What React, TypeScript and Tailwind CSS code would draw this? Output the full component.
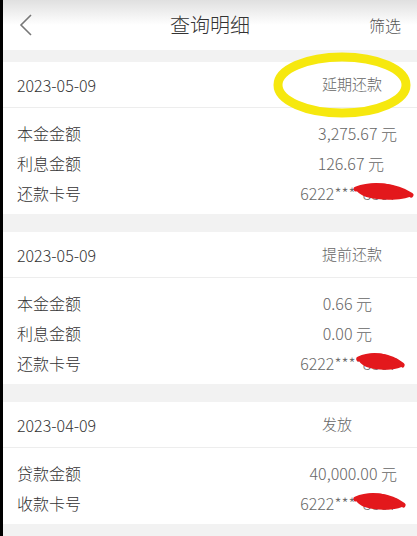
import React from "react";

type Row = { label: string; value: string; pr: string; card?: boolean };
type Record = { date: string; tag: string; rows: Row[]; scribble: string };

const records: Record[] = [
  {
    date: "2023-05-09",
    tag: "延期还款",
    scribble: "right-[3px] w-[62px]",
    rows: [
      { label: "本金金额", value: "3,275.67 元", pr: "pr-[20px]" },
      { label: "利息金额", value: "126.67 元", pr: "pr-[33px]" },
      { label: "还款卡号", value: "6222****8867", pr: "pr-[20px]", card: true },
    ],
  },
  {
    date: "2023-05-09",
    tag: "提前还款",
    scribble: "right-[12px] w-[50px]",
    rows: [
      { label: "本金金额", value: "0.66 元", pr: "pr-[45px]" },
      { label: "利息金额", value: "0.00 元", pr: "pr-[45px]" },
      { label: "还款卡号", value: "6222****8867", pr: "pr-[20px]", card: true },
    ],
  },
  {
    date: "2023-04-09",
    tag: "发放",
    scribble: "right-[11px] w-[54px]",
    rows: [
      { label: "贷款金额", value: "40,000.00 元", pr: "pr-[20px]" },
      { label: "收款卡号", value: "6222****8867", pr: "pr-[20px]", card: true },
    ],
  },
];

// 红色涂抹 (遮住卡号)
function Scribble({ cls }: { cls: string }) {
  return (
    <svg className={`absolute top-[2px] h-[22px] ${cls}`} viewBox="0 0 60 22" preserveAspectRatio="none">
      <path
        d="M3 9 C12 4, 26 2, 38 5 C48 8, 55 12, 58 16 C52 19, 38 21, 24 19 C14 18, 7 15, 3 9 Z"
        fill="#e3181c"
      />
      <path d="M4 9 C20 3, 42 5, 57 15" stroke="#e3181c" strokeWidth="5" fill="none" strokeLinecap="round" />
    </svg>
  );
}

function RecordCard({ r, first }: { r: Record; first: boolean }) {
  return (
    <div className="bg-white relative">
      <div className="flex items-center h-[46px] pl-[14px] border-b border-[#ededed]">
        <span className="flex-1 text-[16px] font-light text-[#333]">{r.date}</span>
        <span className="w-[95px] text-[15px] font-light text-[#666]">{r.tag}</span>
      </div>
      {first && (
        <svg className="absolute left-[269px] top-[-10px]" width="140" height="66" viewBox="0 0 140 66">
          <ellipse cx="70" cy="33" rx="64" ry="28" fill="none" stroke="#f6e80e" strokeWidth="9" />
        </svg>
      )}
      <div className="pt-[10px] pb-[6px]">
        {r.rows.map((row) => (
          <div key={row.label} className={`relative flex items-center justify-between h-[30px] pl-[14px] ${row.pr}`}>
            <span className="text-[16px] font-light text-[#333]">{row.label}</span>
            <span className="text-[16px] font-light text-[#666]">{row.value}</span>
            {row.card && <Scribble cls={r.scribble} />}
          </div>
        ))}
      </div>
    </div>
  );
}

export default function App() {
  return (
    <div
      className="w-[417px] min-h-[536px] bg-[#f2f2f2] border-l-[3px] border-black overflow-hidden"
      style={{ fontFamily: '"Noto Sans CJK SC", "Noto Sans", sans-serif' }}
    >
      <div className="h-[50px] flex items-center relative bg-gradient-to-b from-[#e0e0e0] via-white to-white">
        <svg className="ml-[16px]" width="14" height="24" viewBox="0 0 14 24">
          <path d="M12 2 L2 12 L12 22" stroke="#777" strokeWidth="1.6" fill="none" />
        </svg>
        <span className="absolute left-0 right-0 text-center text-[20px] font-light text-[#333] pointer-events-none">查询明细</span>
        <span className="ml-auto mr-[16px] text-[16px] font-light text-[#555]">筛选</span>
      </div>
      <div className="flex flex-col gap-[18px] pt-[12px] pb-[18px]">
        {records.map((r, i) => (
          <RecordCard key={i} r={r} first={i === 0} />
        ))}
      </div>
    </div>
  );
}
